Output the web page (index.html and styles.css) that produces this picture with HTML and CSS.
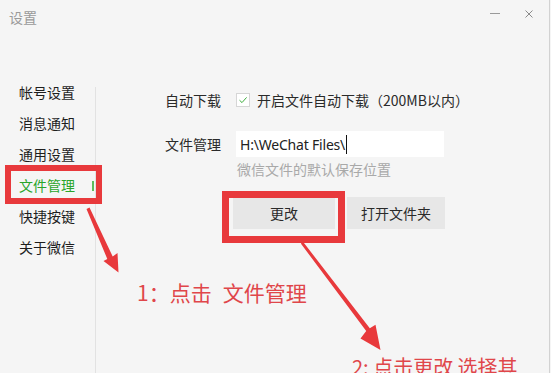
FILE: index.html
```html
<!DOCTYPE html>
<html lang="zh-CN">
<head>
<meta charset="utf-8">
<title>设置</title>
<link rel="stylesheet" href="styles.css">
</head>
<body>
<div class="window">
  <header class="titlebar">
    <span class="title">设置</span>
    <div class="controls">
      <span class="min"></span>
      <svg class="close" width="8" height="8" viewBox="0 0 8 8"><path d="M0.5 0.5L7.5 7.5M7.5 0.5L0.5 7.5" stroke="#8a8a8a" stroke-width="1" fill="none"/></svg>
    </div>
  </header>
  <div class="main">
    <nav class="sidebar">
      <div class="nav-item">帐号设置</div>
      <div class="nav-item">消息通知</div>
      <div class="nav-item">通用设置</div>
      <div class="nav-item active">文件管理<i class="indicator"></i></div>
      <div class="nav-item">快捷按键</div>
      <div class="nav-item">关于微信</div>
    </nav>
    <div class="divider"></div>
    <section class="content">
      <div class="row">
        <span class="label">自动下载</span>
        <span class="checkbox"><svg width="14" height="14" viewBox="0 0 14 14"><path d="M3.5 7.2L6 9.6L10.6 4.4" stroke="#3fae3f" stroke-width="1" fill="none"/></svg></span>
        <span class="check-text">开启文件自动下载（200MB以内）</span>
      </div>
      <div class="row row-input">
        <span class="label">文件管理</span>
        <div class="input"><span class="input-text">H:\WeChat Files\</span><span class="caret"></span></div>
      </div>
      <div class="hint">微信文件的默认保存位置</div>
      <div class="buttons">
        <button class="btn btn-change">更改</button>
        <button class="btn btn-open">打开文件夹</button>
      </div>
    </section>
  </div>

  <div class="mark mark-nav"></div>
  <div class="mark mark-btn"></div>
  <svg class="arrows" width="551" height="373" viewBox="0 0 551 373">
    <polygon fill="#e8393c" points="86.5,209 89.5,207.6 112.7,256.5 117.5,253 118.5,272.5 103.5,261 107.3,259"/>
    <polygon fill="#e8393c" points="300.8,243.5 303.2,242 369.8,328.2 375.5,324.8 380.5,350 360.5,338.5 366.2,331"/>
  </svg>
  <div class="note note-1">1：点击<span class="gap">文件管理</span></div>
  <div class="note note-2">2: 点击更改 选择其</div>
</div>
</body>
</html>
```

FILE: styles.css
```css
* { box-sizing: border-box; }
html, body { margin: 0; padding: 0; }
body {
  background: #f5f5f5;
  font-family: "Noto Sans", "Noto Sans CJK SC", sans-serif;
  color: #333;
  width: 551px;
  height: 373px;
  overflow: hidden;
}
.window {
  position: relative;
  width: 550px;
  height: 373px;
  border-right: 1px solid #d2d2d2;
  background: #f5f5f5;
}
.titlebar {
  height: 77px;
  display: flex;
  align-items: flex-start;
  padding: 0 16px 0 9px;
}
.title {
  font-family: "Noto Sans CJK SC", sans-serif;
  font-size: 14px;
  line-height: 16px;
  margin-top: 9px;
  color: #9a9a9a;
}
.controls {
  margin-left: auto;
  display: flex;
  align-items: flex-start;
  gap: 25px;
}
.min {
  display: block;
  width: 10px;
  height: 1px;
  background: #9a9a9a;
  margin-top: 13px;
}
.close { display: block; margin-top: 10px; }

.main {
  display: flex;
  height: 296px;
}
.sidebar {
  width: 95px;
  padding-left: 19px;
}
.nav-item {
  font-family: "Noto Sans CJK SC", sans-serif;
  font-size: 14px;
  line-height: 31px;
  height: 31px;
  color: #1e1e1e;
  display: flex;
  align-items: center;
  justify-content: space-between;
}
.nav-item.active { color: #2aa52a; }
.indicator {
  display: block;
  width: 2px;
  height: 10px;
  background: #5dbb5d;
  margin-right: 1px;
}
.divider {
  width: 1px;
  margin-top: 10px;
  background: #e2e2e2;
}
.content {
  padding: 13px 0 0 69px;
  font-family: "Noto Sans CJK SC", sans-serif;
  font-size: 14px;
}
.row {
  display: flex;
  align-items: center;
  height: 20px;
}
.label {
  width: 71px;
  color: #2a2a2a;
}
.checkbox {
  width: 14px;
  height: 14px;
  background: #fff;
  border: 1px solid #d6d6d6;
  margin-right: 7px;
  display: flex;
}
.checkbox svg { margin: -1px; }
.check-text { color: #2a2a2a; }
.row-input {
  margin-top: 21px;
  height: 26px;
}
.input {
  width: 208px;
  height: 26px;
  background: #fff;
  padding-left: 4px;
  display: flex;
  align-items: center;
}
.input-text {
  font-family: "Noto Sans", sans-serif;
  font-size: 14px;
  color: #222;
  letter-spacing: -0.2px;
}
.caret {
  width: 1px;
  height: 19px;
  background: #111;
  margin-left: 1px;
}
.hint {
  margin-top: 4px;
  padding-left: 72px;
  line-height: 16px;
  color: #a9a9a9;
}
.buttons {
  margin-top: 20px;
  margin-left: 68px;
  display: flex;
  gap: 12px;
}
.btn {
  height: 32px;
  border: none;
  background: #e7e7e7;
  font-family: "Noto Sans CJK SC", sans-serif;
  font-size: 14px;
  color: #2a2a2a;
  padding: 0;
}
.btn-change { width: 102px; }
.btn-open { width: 98px; }

.mark {
  position: absolute;
  border: 6px solid #e8393c;
}
.mark-nav { left: 5px; top: 165px; width: 97px; height: 39px; }
.mark-btn { left: 222px; top: 191px; width: 123px; height: 52px; border-width: 7px; }
.arrows { position: absolute; left: 0; top: 0; pointer-events: none; }
.note {
  position: absolute;
  font-family: "Noto Sans CJK SC", sans-serif;
  font-size: 21px;
  line-height: 21px;
  color: #e0464a;
  white-space: nowrap;
}
.note-1 { left: 137px; top: 282px; }
.gap { margin-left: 11px; }
.note-2 { left: 352px; top: 356px; font-size: 20px; }
```
